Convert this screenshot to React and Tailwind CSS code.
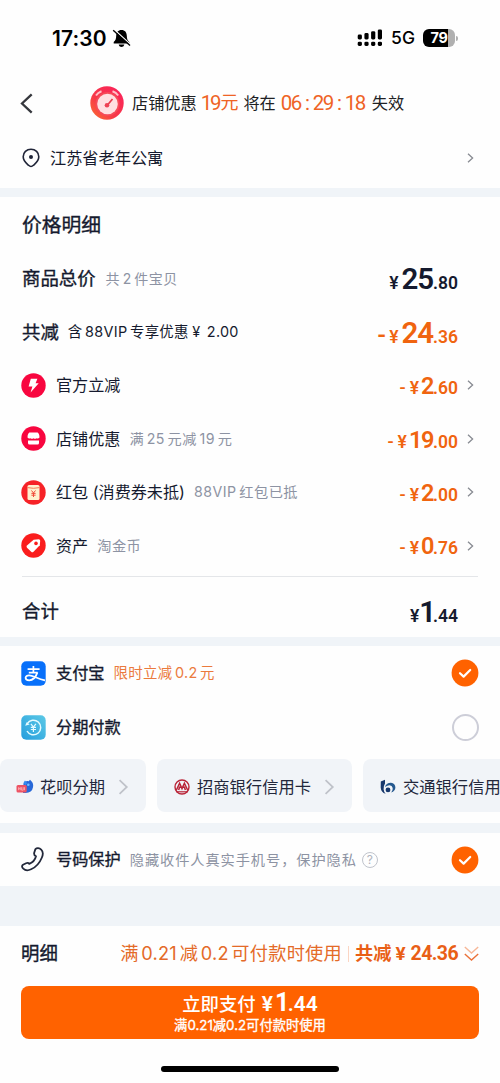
import React from "react";

function Chevron({ className, w = 7, h = 10, stroke = 1.3 }) {
  return (
    <svg
      className={className}
      width={w}
      height={h}
      viewBox="0 0 7 10"
      fill="none"
      stroke="currentColor"
      strokeWidth={stroke}
    >
      <path d="M1 0.7 L5.6 5 L1 9.3" />
    </svg>
  );
}

function StatusBar() {
  return (
    <header className="flex h-[76px] items-center pl-[52px] pr-[42px] text-black">
      <span className="font-['Inter'] text-[21px] font-semibold leading-none tracking-[0.1px]">
        17:30
      </span>
      <svg className="ml-[5px]" width="19" height="19" viewBox="0 0 19 19">
        <path
          d="M9.5 1C6 1 4.3 3.4 4.2 6.7C4.1 10 3.6 11 1.7 13.1V14.5H17.3V13.1C15.4 11 14.9 10 14.8 6.7C14.7 3.4 13 1 9.5 1Z"
          fill="black"
        />
        <path d="M6.7 15.6H12.3C11.8 17.4 10.8 18 9.5 18S7.2 17.4 6.7 15.6Z" fill="black" />
        <path d="M2.4 .8L18.6 15.4" stroke="white" strokeWidth="1.3" />
        <path d="M1.2 1.3L18 16.6" stroke="black" strokeWidth="1.4" />
      </svg>
      <svg className="ml-auto" width="26" height="18" viewBox="0 0 26 18">
        <rect x="0.7" y="5.5" width="4.2" height="5" rx="1.4" />
        <rect x="7.4" y="4" width="4.2" height="6.5" rx="1.4" />
        <rect x="14.1" y="2.2" width="4.2" height="8.3" rx="1.4" />
        <rect x="20.8" y="0.4" width="4.2" height="10.1" rx="1.4" />
        <rect x="0.7" y="12.7" width="4.2" height="4.2" rx="1.4" />
        <rect x="7.4" y="12.7" width="4.2" height="4.2" rx="1.4" />
        <rect x="14.1" y="12.7" width="4.2" height="4.2" rx="1.4" />
        <rect x="20.8" y="12.7" width="4.2" height="4.2" rx="1.4" />
      </svg>
      <span className="ml-[8px] font-['Inter'] text-[17.5px] font-medium leading-none">5G</span>
      <div className="ml-[8px] flex h-[18px] w-[32px] items-center justify-center rounded-[6px] bg-[linear-gradient(90deg,#000_79%,#b0b0b0_79%)] font-['Inter'] text-[14.5px] font-bold leading-none tracking-[-0.3px] text-white">
        79
      </div>
      <span className="ml-px h-[5px] w-[2px] rounded-r-full bg-[#b0b0b0]" />
    </header>
  );
}

function ClockIcon() {
  return (
    <svg className="ml-[57px]" width="34" height="34" viewBox="0 0 34 34">
      <defs>
        <linearGradient id="clock" x1="1" y1="0" x2="0" y2="1">
          <stop offset="0" stopColor="#fb1f5d" />
          <stop offset="0.6" stopColor="#f73848" />
          <stop offset="1" stopColor="#fb7030" />
        </linearGradient>
      </defs>
      <circle cx="17" cy="17" r="16.7" fill="url(#clock)" />
      <path d="M6 9.5Q8 6.5 11.5 5.2M22.5 5.2Q26 6.5 28.2 9.5" stroke="#ffc0c6" strokeWidth="2" fill="none" />
      <circle cx="17.5" cy="18" r="12" fill="#f64a58" />
      <circle cx="17.5" cy="18" r="10.3" fill="#ffdfe1" />
      <path d="M17.5 19L22.5 13" stroke="#e8394b" strokeWidth="1.7" />
      <circle cx="17" cy="19.3" r="2.3" fill="#ee4254" />
    </svg>
  );
}

// digits set between Chinese characters get a little air on both sides
function Num({ children, className = "mx-[2.6px]" }) {
  return <span className={className}>{children}</span>;
}

function Price({ minus, int, dec, large, dark, gap = "mr-[0px]", tight }) {
  return (
    <span
      className={`ml-auto flex items-baseline whitespace-nowrap pt-[3px] font-['Roboto'] leading-none ${
        dark ? "text-[#151a2e]" : "text-[#f0640f]"
      }`}
    >
      {minus && (
        <span className={large ? "mr-[3px] text-[24px] font-semibold" : "mr-[4px] text-[18px] font-medium"}>
          -
        </span>
      )}
      <span className={`text-[17.5px] font-semibold ${large && !tight ? "mr-[3px]" : "mr-[2px]"}`}>¥</span>
      <span
        className={
          large
            ? `text-[29.5px] font-semibold tracking-[-1.1px] ${tight ? "-mx-[2px]" : ""}`
            : "text-[23.5px] font-semibold tracking-[-1.4px]"
        }
      >
        {int}
      </span>
      <span className={`text-[17.5px] font-semibold ${gap}`}>.{dec}</span>
    </span>
  );
}

function Badge({ color, children }) {
  return (
    <svg className="-ml-px mr-[10px] shrink-0" width="25" height="25" viewBox="0 0 25 25">
      <circle cx="12.5" cy="12.5" r="12.2" fill={color} />
      {children}
    </svg>
  );
}

const discounts = [
  {
    name: "官方立减",
    int: "2",
    dec: "60",
    icon: (
      <Badge color="#f8063f">
        <path d="M9.8 5.8H16.4L14.6 10.3H17.7L9.6 19.4L11.4 13.6H7.6Z" fill="white" />
      </Badge>
    ),
  },
  {
    name: "店铺优惠",
    note: (
      <>
        满<Num>25</Num>元减<Num>19</Num>元
      </>
    ),
    int: "19",
    dec: "00",
    icon: (
      <Badge color="#f8063f">
        <path
          d="M8.4 6.6H16.6Q18.4 7.5 18.5 11.5Q17.3 13.2 15.5 12.3Q14 13.3 12.5 12.3Q11 13.3 9.5 12.3Q7.7 13.2 6.5 11.5Q6.6 7.5 8.4 6.6ZM7 14.6H18V17Q18 18.5 16.5 18.5H8.5Q7 18.5 7 17Z"
          fill="white"
        />
      </Badge>
    ),
  },
  {
    name: "红包 (消费券未抵)",
    note: (
      <>
        <Num className="mr-[2.6px]">88VIP</Num>红包已抵
      </>
    ),
    int: "2",
    dec: "00",
    icon: (
      <Badge color="#f62227">
        <rect x="6.5" y="5" width="12" height="15" rx="1.5" fill="#fff0cf" />
        <path d="M6.5 7.6Q12.5 9 18.5 7.6" stroke="#f47d55" strokeWidth="1" fill="none" />
        <path d="M10.5 10.5L12.5 13L14.5 10.5M12.5 13V17M10.4 13.4H14.6M10.4 15.2H14.6" stroke="#f04b3b" strokeWidth="1" fill="none" />
      </Badge>
    ),
  },
  {
    name: "资产",
    note: "淘金币",
    int: "0",
    dec: "76",
    icon: (
      <Badge color="#fa1d1d">
        <path
          d="M12.6 6.8L17.6 6.2Q19.2 6.1 19.2 7.8L18.8 12.3L12.5 18.8Q11.3 19.8 10.2 18.8L6 14.7Q5 13.5 6 12.5Z"
          fill="white"
        />
        <circle cx="15" cy="10.4" r="1.8" fill="#fa1d1d" />
      </Badge>
    ),
  },
];

function Checked() {
  return (
    <svg className="ml-auto" width="28" height="28" viewBox="0 0 28 28">
      <circle cx="14" cy="14" r="13.4" fill="#ff6200" />
      <path
        d="M9 14.2L12.6 17.6L19.2 11"
        fill="none"
        stroke="white"
        strokeWidth="2.2"
        strokeLinecap="round"
        strokeLinejoin="round"
      />
    </svg>
  );
}

function AlipayIcon() {
  return (
    <svg className="mr-[10px]" width="25" height="25" viewBox="0 0 25 25" fill="none" stroke="white">
      <rect x="0.3" y="0.3" width="24.4" height="24.4" rx="5" fill="#0870fa" stroke="none" />
      <path d="M6.6 8.2H18.6M12.4 5V11.6M7.8 11.6H16.6" strokeWidth="1.7" />
      <path
        d="M16.4 11.4C15 15.6 11.8 19.3 8.2 19.3C5.8 19.3 4.6 18.2 4.6 16.8C4.6 15.2 6.2 14.2 8.2 14.3C12 14.5 16.6 17.8 24 19.3"
        strokeWidth="1.8"
      />
    </svg>
  );
}

function InstallmentIcon() {
  return (
    <svg className="mr-[10px]" width="25" height="25" viewBox="0 0 25 25" fill="none">
      <defs>
        <linearGradient id="installment" x1="1" y1="0" x2="0" y2="1">
          <stop stopColor="#5cc9e6" />
          <stop offset="1" stopColor="#259ddd" />
        </linearGradient>
      </defs>
      <rect x="0.3" y="0.3" width="24.4" height="24.4" rx="5" fill="url(#installment)" />
      <path d="M6.2 8.7A7.3 7.3 0 1 1 6 16" stroke="#e5fbff" strokeWidth="1.5" />
      <path d="M4.2 10.8L5.6 7.2L8.7 9.5Z" fill="#e5fbff" />
      <path d="M9.9 8.8L12.4 12L14.9 8.8M12.4 12V17M9.8 12.4H15M9.8 14.5H15" stroke="#e5fbff" strokeWidth="1.2" />
    </svg>
  );
}

function HuabeiIcon() {
  return (
    <svg className="mr-[6px] shrink-0" width="18" height="16" viewBox="0 0 18 16">
      <path d="M7.5 4.2Q10 1.3 12.8 2.3L14 .7L15.2 2Q17.8 4.2 17 8.3Q16 14 9.5 14H7Z" fill="#2868d8" />
      <path d="M7.6 3.6L9 1.6L11.2 4.2L9.2 6.2Z" fill="#358df0" />
      <circle cx="12.3" cy="5.8" r="1.3" fill="#73c0ff" />
      <rect x="0.5" y="6" width="10.2" height="7.5" rx="1.5" fill="#ed5364" />
      <path d="M2.6 8.2V11.2M2.6 9.7H4.3M4.3 8.2V11.2M5.6 8.2V11.2H7.2V8.2M8.5 8.2V11.2" stroke="#ffc3c7" strokeWidth=".7" fill="none" />
    </svg>
  );
}

function CmbIcon() {
  return (
    <svg className="mr-[7px] shrink-0" width="16" height="16" viewBox="0 0 16 16" fill="none">
      <circle cx="8" cy="8" r="7" stroke="#b92337" strokeWidth="1.4" />
      <path
        d="M2.4 11L5.6 4.2L8 9.6L10.4 4.2L13.6 11M4.6 11L5.9 7.4M11.4 11L10.1 7.4"
        stroke="#b92337"
        strokeWidth="1.5"
      />
      <path d="M2.4 12.8H13.6" stroke="#b92337" strokeWidth="1.2" />
    </svg>
  );
}

function BocomIcon() {
  return (
    <svg className="mr-[7px] shrink-0" width="16" height="16" viewBox="0 0 16 16">
      <path d="M.8 2.4L5 .8V4.6Q3.4 7.2 3.6 10.2Q3.8 13 5.7 14.8Q1 13.5 .7 8.5Z" fill="#17386d" />
      <path d="M5.8 6Q8 3.5 11 3.7Q15.3 4.2 15.4 8.5Q15.2 12.2 11.2 13.5Q13.1 11.5 12.7 9Q12.1 6.6 9.6 6.3Q7.7 6.2 5 8.1Z" fill="#24588e" />
      <circle cx="8" cy="10.9" r="2.4" fill="#17386d" />
    </svg>
  );
}

function BankChip({ icon, name, className }) {
  return (
    <div
      className={`flex h-[53px] shrink-0 items-center rounded-[8px] bg-[#f1f4f8] pt-[3px] ${className}`}
    >
      {icon}
      <span className="whitespace-nowrap text-[16.3px] text-[#23273b]">{name}</span>
      <Chevron className="ml-auto text-[#bfc2c9]" w={11} h={16} stroke={1.1} />
    </div>
  );
}

const medium = "[-webkit-text-stroke:0.35px_currentColor]";

function App() {
  return (
    <div className="flex h-[1083px] w-[500px] flex-col overflow-hidden bg-[#f0f4f8] font-['Inter','Noto_Sans_CJK_SC',sans-serif] leading-none text-[#151a2e]">
      <section className="h-[188px] bg-[#fefefe]">
        <StatusBar />
        <div className="flex h-[54px] items-center pl-[20px]">
          <svg width="13" height="21" viewBox="0 0 13 21" fill="none" stroke="#36383d" strokeWidth="2.3">
            <path d="M11.7 1.3L2 10.5L11.7 19.7" />
          </svg>
          <ClockIcon />
          <div className="ml-[8px] flex items-center whitespace-nowrap text-[16.2px] text-[#202124]">
            <span>店铺优惠</span>
            <span className="ml-[4px] flex items-center text-[18px] text-[#ef6325]">
              <span className="font-['Roboto'] text-[20.5px] tracking-[-2.2px]">19</span>
              <span className="ml-[1px]">元</span>
            </span>
            <span className="ml-[5px]">将在</span>
            <span className="ml-[5px] flex w-[84px] justify-between font-['Roboto'] text-[20.5px] tracking-[-1.5px] text-[#ef6325]">
              <span>06</span>
              <span>:</span>
              <span>29</span>
              <span>:</span>
              <span>18</span>
            </span>
            <span className="ml-[7px]">失效</span>
          </div>
        </div>
        <div className="flex h-[54px] items-center pl-[22px] pr-[26px] pt-[2px]">
          <svg width="18" height="20" viewBox="0 0 18 20" fill="none">
            <path
              d="M9 1.2C4.5 1.2 1.2 4.6 1.2 8.7C1.2 13 4.2 15.1 6.6 17.3Q9 19.8 11.4 17.3C13.8 15.1 16.8 13 16.8 8.7C16.8 4.6 13.5 1.2 9 1.2Z"
              stroke="#202538"
              strokeWidth="1.6"
            />
            <circle cx="9" cy="8.9" r="2" fill="#202538" />
          </svg>
          <span className="ml-[10px] text-[16.2px]">江苏省老年公寓</span>
          <Chevron className="ml-auto text-[#888b92]" />
        </div>
      </section>

      <section className="mt-[9px] h-[440px] bg-[#fefefe] px-[22px]">
        <h2 className={`flex h-[55px] items-center pt-[3px] text-[19.8px] ${medium}`}>价格明细</h2>

        <div className="flex h-[53.4px] items-center pr-[20px]">
          <span className={`text-[18.4px] ${medium}`}>商品总价</span>
          <span className="ml-[10px] text-[14px] tracking-[0.5px] text-[#8d93a3]">
            共<Num>2</Num>件宝贝
          </span>
          <Price int="25" dec="80" large dark />
        </div>
        <div className="flex h-[53.4px] items-center pr-[20px]">
          <span className={`text-[18.4px] ${medium}`}>共减</span>
          <span className="ml-[9px] whitespace-pre text-[14.4px] tracking-[0.3px]">
            含<Num>88VIP</Num>专享优惠<Num className="ml-[3.5px] mr-[2px]">¥</Num> 2.00
          </span>
          <Price minus int="24" dec="36" large />
        </div>

        {discounts.map((item) => (
          <div key={item.name} className="flex h-[53.4px] items-center pr-[4px]">
            {item.icon}
            <span className="whitespace-nowrap text-[16.1px]">{item.name}</span>
            <span className="ml-[9px] whitespace-nowrap text-[14.2px] tracking-[0.5px] text-[#8d93a3]">
              {item.note}
            </span>
            <Price minus int={item.int} dec={item.dec} gap="mr-[9px]" />
            <Chevron className="text-[#888b92]" />
          </div>
        ))}

        <div className="mt-[4px] flex h-[60px] items-center border-t border-[#e4e6e9] pr-[20px] pt-[8px]">
          <span className={`text-[18.4px] ${medium}`}>合计</span>
          <Price int="1" dec="44" large dark tight />
        </div>
      </section>

      <section className="mt-[9px] h-[177px] bg-[#fefefe]">
        <div className="flex h-[54px] items-center px-[21px]">
          <AlipayIcon />
          <span className={`text-[16.2px] ${medium}`}>支付宝</span>
          <span className="ml-[9px] text-[14.4px] tracking-[0.3px] text-[#eb7a3d]">
            限时立减<Num>0.2</Num>元
          </span>
          <Checked />
        </div>
        <div className="flex h-[54px] items-center px-[21px]">
          <InstallmentIcon />
          <span className={`text-[16.2px] ${medium}`}>分期付款</span>
          <span className="ml-auto size-[27px] rounded-full border-2 border-[#cdced8]" />
        </div>
        <div className="mt-[5px] flex gap-[11px] overflow-hidden">
          <BankChip icon={<HuabeiIcon />} name="花呗分期" className="w-[146px] pl-[16px] pr-[17px]" />
          <BankChip icon={<CmbIcon />} name="招商银行信用卡" className="w-[195px] pl-[17px] pr-[17px]" />
          <BankChip icon={<BocomIcon />} name="交通银行信用卡" className="w-[195px] pl-[17px] pr-[17px]" />
        </div>
      </section>

      <section className="mt-[10px] flex h-[53px] items-center bg-[#fefefe] px-[21px]">
        <svg className="mr-[12px]" width="23" height="25" viewBox="0 0 23 25" fill="none">
          <path
            d="M14.4 2.1C15.8 .8 18.4 .9 20.2 2.6C22.1 4.5 22.3 7.2 20.9 10.5C18.9 15.4 14.9 20.2 10.1 22.3C7.1 23.7 4.3 23.6 2.3 21.7C.8 20.2 .6 18.6 2 17.7L5.1 16.2C6.3 15.6 7.4 15.7 8.3 16.9C11.1 15.8 14.2 12.5 15 9.3C13.4 8.6 12.9 7.3 13.2 5.8Z"
            stroke="#22283a"
            strokeWidth="1.8"
            strokeLinejoin="round"
          />
        </svg>
        <span className={`whitespace-nowrap text-[16.2px] ${medium}`}>号码保护</span>
        <span className="ml-[9px] whitespace-nowrap pt-[2px] text-[14.2px] tracking-[0.95px] text-[#8d93a3]">
          隐藏收件人真实手机号，保护隐私
        </span>
        <span className="ml-[5px] flex size-[16px] shrink-0 items-center justify-center rounded-full border border-[#c0c4cc] text-[12px] text-[#b0b4bd]">
          ?
        </span>
        <Checked />
      </section>

      <section className="mt-[40px] flex flex-1 flex-col bg-[#fefefe] px-[21px]">
        <div className="flex h-[60px] items-center whitespace-nowrap pb-[5px]">
          <span className={`text-[18.4px] ${medium}`}>明细</span>
          <span className="ml-auto text-[18.2px] tracking-[0.25px] text-[#e46a28]">
            满<Num>0.21</Num>减<Num>0.2</Num>可付款时使用
          </span>
          <span className="mx-[6px] h-[16px] w-px bg-[#fbd5c3]" />
          <span className="flex items-center text-[18.2px] font-bold text-[#e95f16]">
            <span>共减</span>
            <span className="ml-[4px] font-['Roboto'] text-[19px] font-bold">¥</span>
            <span className="ml-[5px] font-['Roboto'] text-[19.5px] tracking-[-0.6px]">24.36</span>
          </span>
          <svg className="ml-[6px]" width="15" height="16" viewBox="0 0 15 16" fill="none" strokeWidth="1.4">
            <path d="M.8 1L7.5 7L14.2 1" stroke="#f7b797" />
            <path d="M.8 8L7.5 14L14.2 8" stroke="#eb7138" />
          </svg>
        </div>
        <button className="flex h-[53px] w-full flex-col items-center rounded-[8px] bg-[#ff6200] pt-[4px] text-white">
          <span className="flex items-baseline text-[18.4px] font-medium leading-[23px]">
            立即支付
            <span className="ml-[6px] font-['Roboto'] text-[21px] font-semibold">¥</span>
            <span className="ml-[2px] font-['Roboto'] text-[25px] font-bold leading-none tracking-[-1.5px]">1</span>
            <span className="font-['Roboto'] text-[21px] font-semibold leading-none">.44</span>
          </span>
          <span className={`mt-[3px] whitespace-nowrap text-[13.3px] ${medium}`}>满0.21减0.2可付款时使用</span>
        </button>
        <div className="mx-auto mt-[27px] h-[6px] w-[178px] rounded-full bg-black" />
      </section>
    </div>
  );
}

export default App;
